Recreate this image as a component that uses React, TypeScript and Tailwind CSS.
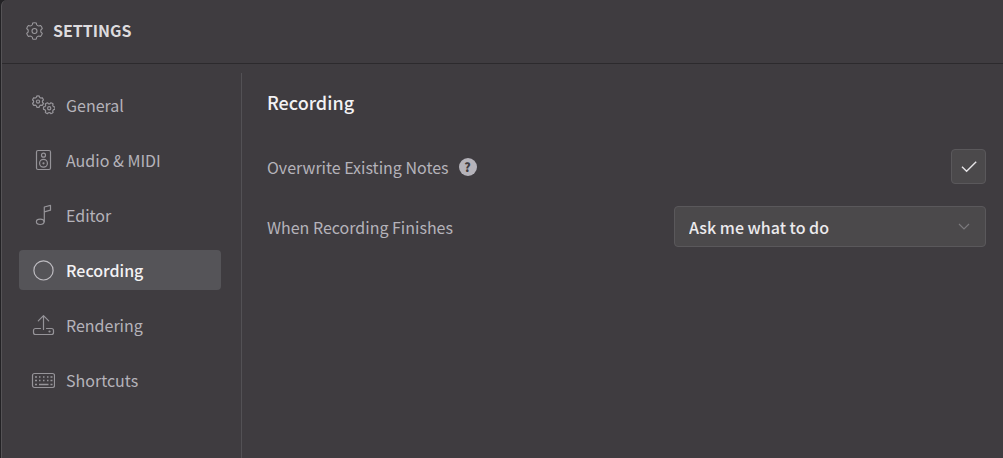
import { useState } from "react";
import type { ReactNode } from "react";

function gearPath(cx: number, cy: number, r: number, turn: number) {
  const point = (radius: number, degrees: number) => {
    const a = (degrees * Math.PI) / 180;
    return `${(cx + radius * Math.cos(a)).toFixed(2)} ${(cy + radius * Math.sin(a)).toFixed(2)}`;
  };
  let d = "";
  for (let i = 0; i < 6; i++) {
    const a = turn + i * 60;
    d += `${i ? "L" : "M"}${point(r * 0.8, a - 19)}L${point(r * 0.98, a - 13)}Q${point(r * 1.02, a)} ${point(r * 0.98, a + 13)}L${point(r * 0.8, a + 19)}Q${point(r * 0.72, a + 30)} ${point(r * 0.8, a + 41)}`;
  }
  return d + "Z";
}

function Icon({ children }: { children: ReactNode }) {
  return (
    <svg
      className="h-6 w-6 shrink-0"
      viewBox="0 0 24 24"
      fill="none"
      stroke="currentColor"
      strokeWidth="1.2"
      strokeLinecap="round"
      strokeLinejoin="round"
      aria-hidden="true"
    >
      {children}
    </svg>
  );
}

const GearsIcon = () => (
  <Icon>
    <path d={gearPath(7, 8.6, 5.8, 90)} />
    <circle cx="7" cy="8.6" r="1.6" />
    <path d={gearPath(18.2, 15.2, 5.8, 0)} />
    <circle cx="18.2" cy="15.2" r="1.6" />
  </Icon>
);

const SpeakerIcon = () => (
  <Icon>
    <rect x="5.5" y="2.5" width="14" height="19" rx="1.5" />
    <circle cx="12.5" cy="7.2" r="2" />
    <circle cx="12.5" cy="15.3" r="3.9" />
    <circle cx="12.5" cy="15.3" r="0.5" />
  </Icon>
);

const NoteIcon = () => (
  <Icon>
    <ellipse cx="9.2" cy="18.8" rx="3.8" ry="2.7" />
    <path d="M13.3 18.8V4l6.2-1.6v4.8l-6.2 1.6" />
  </Icon>
);

const CircleIcon = () => (
  <Icon>
    <circle cx="12.5" cy="12.4" r="9.6" />
  </Icon>
);

const UploadIcon = () => (
  <Icon>
    <path d="M12.5 16.5V2.6M7.3 7.8l5.2-5.2 5.2 5.2" />
    <path d="M9.5 15.5h-5a2 2 0 0 0-2 2v2a2 2 0 0 0 2 2h16a2 2 0 0 0 2-2v-2a2 2 0 0 0-2-2h-5" />
    <circle cx="18.5" cy="18.5" r="0.5" />
  </Icon>
);

const KeyboardIcon = () => (
  <Icon>
    <rect x="1.5" y="5.5" width="22" height="14" rx="2" />
    <path
      d="M4 9h2M8 9h1.5M12 9h1.5M16 9h1.5M19.5 9h2M4 12.5h2M8 12.5h1.5M12 12.5h1.5M16 12.5h1.5M19.5 12.5h2M4 16.5h2M8 16.5h9.5M19.5 16.5h2"
      strokeWidth="1.4"
      strokeLinecap="butt"
    />
  </Icon>
);

const sections = [
  { name: "General", icon: <GearsIcon /> },
  { name: "Audio & MIDI", icon: <SpeakerIcon /> },
  { name: "Editor", icon: <NoteIcon /> },
  { name: "Recording", icon: <CircleIcon /> },
  { name: "Rendering", icon: <UploadIcon /> },
  { name: "Shortcuts", icon: <KeyboardIcon /> },
];

export default function App() {
  const [active, setActive] = useState("Recording");
  const [overwrite, setOverwrite] = useState(true);

  return (
    <div className="min-h-screen bg-[#232225] pl-px font-['Noto_Sans_CJK_SC','Noto_Sans',sans-serif] text-base text-[#b5b3ba]">
      <div className="flex min-h-screen flex-col rounded-tl-md border-l border-[#555356] bg-[#3f3c40]">
        <header className="flex h-16 items-center gap-2 border-b border-[#2c2a2d] pb-1 pl-[23px]">
          <svg className="h-5 w-5 text-[#99979b]" viewBox="0 0 20 20" fill="none" stroke="currentColor" strokeWidth="1.1" strokeLinejoin="round" aria-hidden="true">
            <path d={gearPath(9.5, 11, 8.3, 90)} />
            <circle cx="9.5" cy="11" r="2.5" />
          </svg>
          <h1 className="font-bold text-[#dddbde]">SETTINGS</h1>
        </header>

        <div className="flex flex-1 pt-[9px]">
          <nav className="flex w-60 shrink-0 flex-col gap-[15px] border-r border-[#535155] py-3 pr-5 pl-[17px]">
            {sections.map(({ name, icon }) => (
              <button
                key={name}
                type="button"
                aria-current={active === name ? "page" : undefined}
                onClick={() => setActive(name)}
                className={`flex h-10 items-center gap-[11px] rounded pl-3 text-left ${active === name ? "bg-[#555458] font-medium text-[#f3f2f4]" : ""}`}
              >
                <span className={active === name ? "text-[#bdbbc0]" : "text-[#969499]"}>{icon}</span>
                {name}
              </button>
            ))}
          </nav>

          <main className="flex flex-1 flex-col pt-[15px] pr-[17px] pl-[25px]">
            <h2 className="text-lg font-medium text-[#f3f2f4]">{active}</h2>
            <div className="mt-[33px] flex items-center justify-between">
              <div className="flex items-center gap-2.5">
                <label htmlFor="overwrite">Overwrite Existing Notes</label>
                <button type="button" aria-label="Help" className="flex h-[18px] w-[18px] items-center justify-center rounded-full bg-[#b5b3ba] text-xs font-black text-[#3f3c40]">
                  ?
                </button>
              </div>
              <div className="grid h-[35px] w-[35px]">
                <input
                  id="overwrite"
                  type="checkbox"
                  checked={overwrite}
                  onChange={(e) => setOverwrite(e.target.checked)}
                  className="peer col-start-1 row-start-1 h-full w-full appearance-none rounded border border-[#5a585b] bg-[#4b494b]"
                />
                <svg className="pointer-events-none invisible col-start-1 row-start-1 h-4 w-4 place-self-center text-[#e6e4e7] peer-checked:visible" viewBox="0 0 16 16" fill="none" stroke="currentColor" strokeWidth="1.4" aria-hidden="true">
                  <path d="M1 7.7 5.6 12.3 15.2 2.7" />
                </svg>
              </div>
            </div>
            <div className="mt-[22px] flex items-center justify-between">
              <label htmlFor="finish">When Recording Finishes</label>
              <div className="grid h-[41px] w-[312px]">
                <select id="finish" className="col-start-1 row-start-1 h-full w-full appearance-none rounded border border-[#5a585b] bg-[#4b494b] pr-9 pl-3.5 font-medium text-[#eceaed]">
                  <option>Ask me what to do</option>
                </select>
                <svg className="pointer-events-none col-start-1 row-start-1 mr-4 h-3 w-3 self-center justify-self-end text-[#7b797d]" viewBox="0 0 12 12" fill="none" stroke="currentColor" strokeWidth="1.2" aria-hidden="true">
                  <path d="m1 3 5 5 5-5" />
                </svg>
              </div>
            </div>
          </main>
        </div>
      </div>
    </div>
  );
}
